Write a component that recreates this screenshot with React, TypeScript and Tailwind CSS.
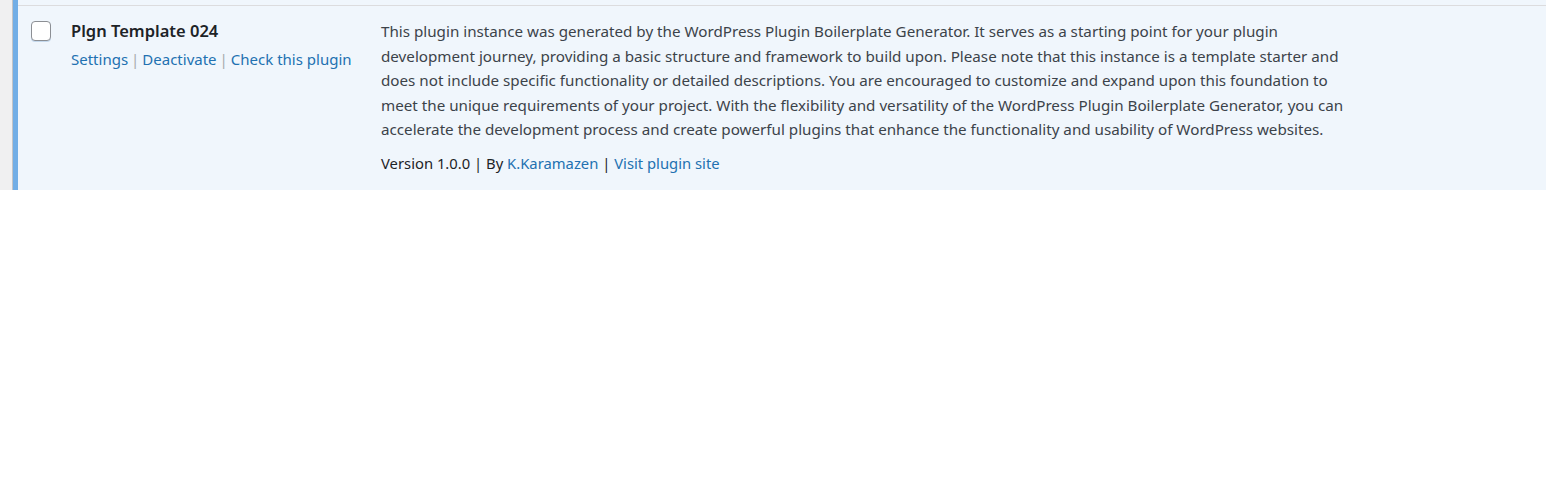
import React from 'react';

const description = [
  'This plugin instance was generated by the WordPress Plugin Boilerplate Generator. It serves as a starting point for your plugin',
  'development journey, providing a basic structure and framework to build upon. Please note that this instance is a template starter and',
  'does not include specific functionality or detailed descriptions. You are encouraged to customize and expand upon this foundation to',
  'meet the unique requirements of your project. With the flexibility and versatility of the WordPress Plugin Boilerplate Generator, you can',
  'accelerate the development process and create powerful plugins that enhance the functionality and usability of WordPress websites.',
];

const Sep = () => <span className="text-[#a7aaad] px-[3px]">|</span>;

export default function App() {
  return (
    <div className="w-[1546px] h-[500px] bg-white font-['Noto_Sans',sans-serif]">
      <div className="flex h-[190px]">
        {/* admin background strip */}
        <div className="w-[13px] bg-[#f0f0f1] border-r border-[#c3c4c7]" />
        {/* active plugin row */}
        <div className="flex-1 flex flex-col bg-[#f0f6fc] border-l-[5px] border-[#72aee6]">
          <div className="h-[5px]" />
          <div className="h-px bg-[#dcdcde]" />
          <div className="flex flex-1">
            <div className="w-[53px] pl-[13px] pt-[15px]">
              <div className="w-[20px] h-[20px] rounded-[4px] border border-[#8c8f94] bg-white shadow-[0_1px_0_#c5d9ed]" />
            </div>
            <div className="w-[310px] pt-[13px]">
              <div className="text-[16.5px] leading-[24px] font-semibold text-[#1d2327]">Plgn Template 024</div>
              <div className="mt-[6px] text-[15px] leading-[20px] text-[#2271b1]">
                <span>Settings</span>
                <Sep />
                <span>Deactivate</span>
                <Sep />
                <span>Check this plugin</span>
              </div>
            </div>
            <div className="pt-[13px] text-[15.2px] text-[#3c434a]">
              <div className="leading-[24.5px]">
                {description.map((line) => (
                  <div key={line} className="whitespace-nowrap">{line}</div>
                ))}
              </div>
              <div className="mt-[9px] leading-[24.5px] text-[#1d2327] text-[14.8px]">
                Version 1.0.0 | By <span className="text-[#2271b1]">K.Karamazen</span> | <span className="text-[#2271b1]">Visit plugin site</span>
              </div>
            </div>
          </div>
        </div>
      </div>
    </div>
  );
}
